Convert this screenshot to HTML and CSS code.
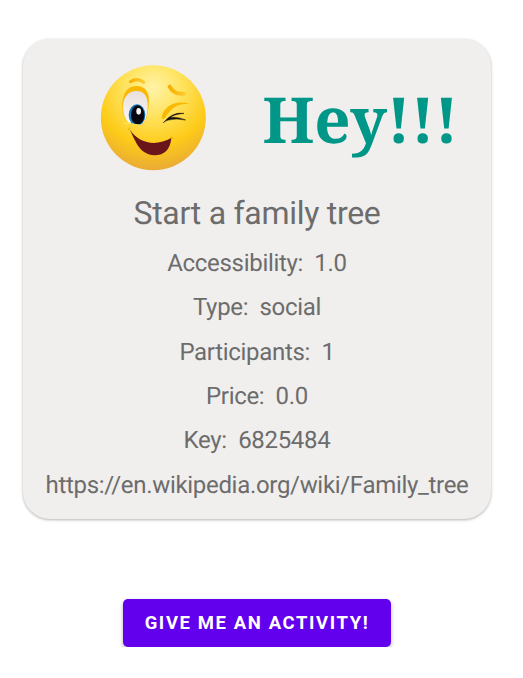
FILE: index.html
```html
<!DOCTYPE html>
<html lang="en">
<head>
<meta charset="utf-8">
<title>Activity</title>
<link rel="stylesheet" href="styles.css">
</head>
<body>
<main class="card">
<header class="head">
<svg class="emoji" viewBox="0 0 390 375" role="img" aria-label="Winking face">
<defs>
<radialGradient id="face" cx=".5" cy=".22" r=".8"><stop offset="0" stop-color="#fff3a8"/><stop offset=".3" stop-color="#ffe566"/><stop offset=".68" stop-color="#fdcb18"/><stop offset="1" stop-color="#e8a838"/></radialGradient>
<linearGradient id="brow" x1="0" y1="0" x2="1" y2="0"><stop offset="0" stop-color="#f6b000"/><stop offset="1" stop-color="#fdc92c"/></linearGradient>
<linearGradient id="eye" x1="0" y1="0" x2="0" y2="1"><stop offset="0" stop-color="#e8e0de"/><stop offset="1" stop-color="#fbf8f5"/></linearGradient>
<clipPath id="eyeclip"><path d="M99 160C98 126 115 108 140 108C164 108 174 126 173 156C172 182 166 201 154 209L116 203C105 192 100 178 99 160Z"/></clipPath>
</defs>
<circle cx="190" cy="188" r="157.500" fill="url(#face)"/>
<path d="M121 80C134 72 149 72 161 82" fill="none" stroke="url(#brow)" stroke-width="9" stroke-linecap="round"/>
<path d="M239 95C247 110 262 118 281 116" fill="none" stroke="url(#brow)" stroke-width="12" stroke-linecap="round"/>
<path d="M97 160C94 120 110 93 139 93C168 93 181 116 176 150C174 176 169 198 157 210L154 209L116 203C102 190 98 175 97 160Z" fill="#f9b900"/>
<path d="M99 160C98 126 115 108 140 108C164 108 174 126 173 156C172 182 166 201 154 209L116 203C105 192 100 178 99 160Z" fill="url(#eye)"/>
<g clip-path="url(#eyeclip)"><ellipse cx="141" cy="180" rx="25" ry="32" fill="#1676b8"/><ellipse cx="143" cy="180" rx="20" ry="29" fill="#05080c"/></g>
<ellipse cx="146" cy="169" rx="7" ry="10" fill="#f4f4f4"/>
<path d="M103 203Q111 209 122 205" fill="none" stroke="#ffe14e" stroke-width="5"/>
<path d="M215 188C219 160 248 133 299 146C267 145 247 154 225 188Q217 196 215 188Z" fill="#f9b900"/>
<path d="M220 203Q247 170 282 175Q253 178 240 188Q260 184 287 195Q257 189 236 195Q228 196 220 203Z" fill="#16120d" stroke="#16120d" stroke-width="1.500"/>
<path d="M119 223C151 273 205 271 244 249C241 283 224 301 193 301C152 299 138 265 119 223Z" fill="#69151a"/>
<path d="M114 225Q117 218 122 219M242 246Q247 246 250 251" fill="none" stroke="#eba900" stroke-width="3"/>
</svg>
<h1 class="hey">Hey!!!</h1>
</header>
<p class="title">Start a family tree</p>
<p class="row">Accessibility:&nbsp; 1.0</p>
<p class="row">Type:&nbsp; social</p>
<p class="row">Participants:&nbsp; 1</p>
<p class="row">Price:&nbsp; 0.0</p>
<p class="row">Key:&nbsp; 6825484</p>
<p class="row">https://en.wikipedia.org/wiki/Family_tree</p>
</main>
<button class="btn">GIVE ME AN ACTIVITY!</button>
</body>
</html>
```
FILE: styles.css
```css
* { box-sizing: border-box; margin: 0; }
body { background: #fff; font-family: Roboto, sans-serif; color: #6d6c6c; display: flex; flex-direction: column; align-items: center; padding: 39px 9px 0 0; text-rendering: geometricPrecision; }
.card { width: 468px; height: 480px; border-radius: 27px; background: #f0efee; box-shadow: 0 1px 3px rgba(0,0,0,.3); padding-top: 26px; text-align: center; }
.head { display: flex; height: 106px; padding-left: 66.5px; }
.emoji { width: 130px; height: 125px; flex: none; margin-top: -10px; }
.hey { margin-left: 43px; font: bold 63.5px/107px "Noto Serif", "Noto Sans", serif; letter-spacing: -.35px; color: #009688; white-space: nowrap; }
.title { margin-top: 21.5px; font-size: 32px; line-height: 40px; letter-spacing: -.28px; }
.row { font-size: 24px; line-height: 28px; margin-top: 16.4px; letter-spacing: -.31px; white-space: nowrap; }
.btn { margin-top: 79.5px; width: 268px; height: 48px; border: 0; border-radius: 5px; background: #6200ee; color: #fff; font: 700 18.5px Roboto, sans-serif; letter-spacing: 1.6px; box-shadow: 0 2px 4px rgba(0,0,0,.3); padding: 0; white-space: nowrap; }
```
